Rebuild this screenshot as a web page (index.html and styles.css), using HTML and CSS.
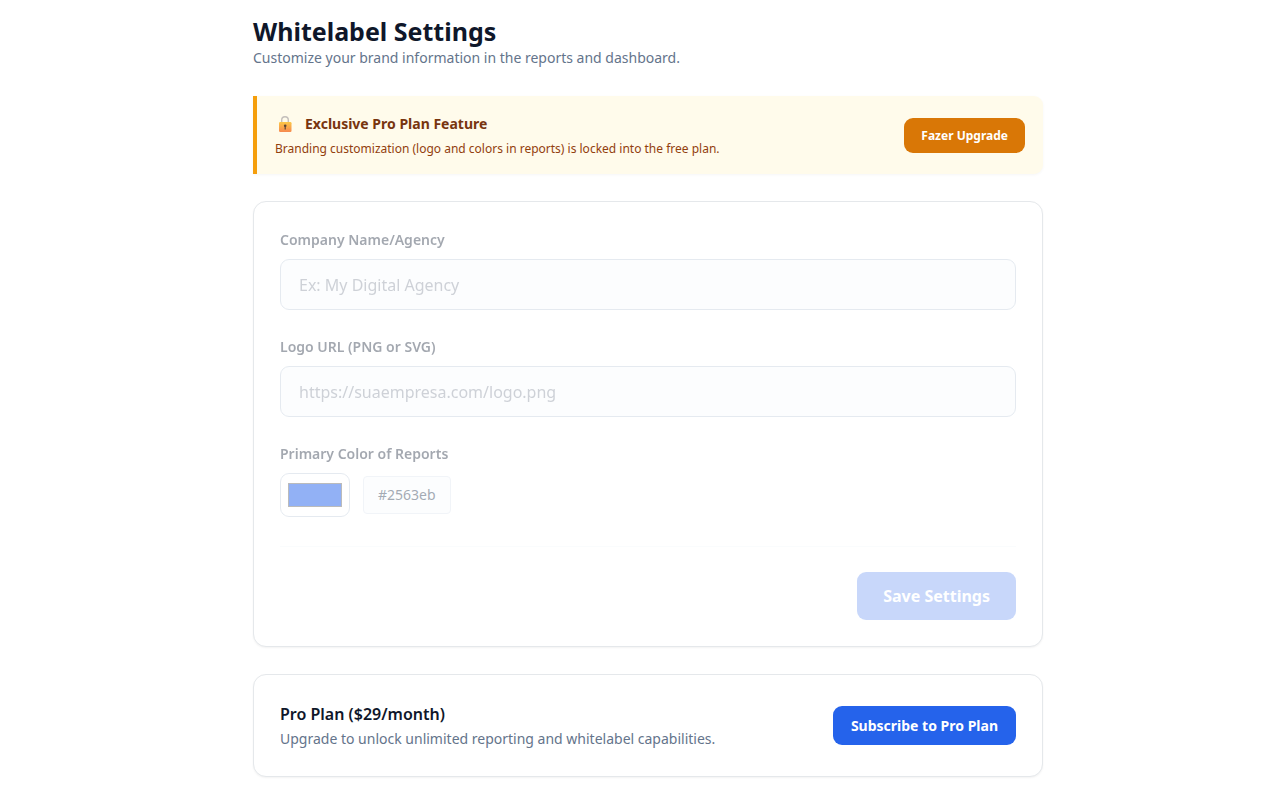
FILE: index.html
```html
<!DOCTYPE html>
<html lang="en">
<head>
  <meta charset="UTF-8" />
  <meta name="viewport" content="width=device-width, initial-scale=1.0" />
  <title>Whitelabel Settings</title>
  <link rel="stylesheet" href="styles.css">
</head>
<body>

  <main class="page">
    <header class="page-header">
      <h1>Whitelabel Settings</h1>
      <p>Customize your brand information in the reports and dashboard.</p>
    </header>

    <section class="notice">
      <div class="notice-text">
        <h2>
          <svg class="lock" viewBox="0 0 20 18" aria-hidden="true">
            <defs>
              <linearGradient id="lockBody" x1="0" y1="0" x2="0" y2="1">
                <stop offset="0" stop-color="#fcc746" />
                <stop offset="1" stop-color="#f6894f" />
              </linearGradient>
            </defs>
            <path d="M6.7 9V5a3.3 3.3 0 0 1 6.6 0V9" fill="none" stroke="#c4bfbb" stroke-width="1.4" />
            <rect x="4" y="7" width="12.5" height="10" rx="1.2" fill="url(#lockBody)" />
            <circle cx="10.2" cy="10.8" r="1.3" fill="#5c4436" />
            <path d="M9.6 11h1.2v3.4H9.6z" fill="#5c4436" />
          </svg>
          Exclusive Pro Plan Feature
        </h2>
        <p>Branding customization (logo and colors in reports) is locked into the free plan.</p>
      </div>
      <button type="button" class="btn btn-upgrade">Fazer Upgrade</button>
    </section>

    <form class="card">
      <fieldset class="fields" disabled>
        <div class="form-group">
          <label for="company">Company Name/Agency</label>
          <input type="text" id="company" placeholder="Ex: My Digital Agency" />
        </div>
        <div class="form-group">
          <label for="logoUrl">Logo URL (PNG or SVG)</label>
          <input type="text" id="logoUrl" placeholder="https://suaempresa.com/logo.png" />
        </div>
        <div class="form-group">
          <label for="color">Primary Color of Reports</label>
          <div class="color-row">
            <input type="color" id="color" value="#2563eb" />
            <span class="color-code">#2563eb</span>
          </div>
        </div>
        <div class="form-footer">
          <button type="submit" class="btn btn-save">Save Settings</button>
        </div>
      </fieldset>
    </form>

    <section class="card plan">
      <div class="plan-text">
        <h2>Pro Plan ($29/month)</h2>
        <p>Upgrade to unlock unlimited reporting and whitelabel capabilities.</p>
      </div>
      <button type="button" class="btn btn-subscribe">Subscribe to Pro Plan</button>
    </section>
  </main>

</body>
</html>
```
FILE: styles.css
```css
* {
  box-sizing: border-box;
}
body {
  font-family: 'Segoe UI', 'Noto Sans', 'Open Sans', sans-serif;
  background: #fff;
  margin: 0;
  padding: 16px 0 16px 16px;
}
h1, h2, p {
  margin: 0;
}
.page {
  max-width: 790px;
  margin: 0 auto;
  display: flex;
  flex-direction: column;
  gap: 27px;
}
.page-header h1 {
  color: #0f172a;
  font-size: 25px;
  line-height: 31px;
  font-weight: 700;
}
.page-header p {
  color: #64748b;
  font-size: 14px;
  line-height: 22px;
}
.notice {
  display: flex;
  align-items: center;
  justify-content: space-between;
  gap: 16px;
  padding: 12px 18px;
  background: #fffbeb;
  border-left: 4px solid #f59e0b;
  border-radius: 0 9px 9px 0;
  box-shadow: 0 1px 3px rgba(0,0,0,0.04);
}
.notice-text {
  padding-top: 4px;
}
.notice h2 {
  display: flex;
  align-items: center;
  gap: 10px;
  color: #78350f;
  font-size: 14px;
  line-height: 24px;
  font-weight: 700;
}
.notice p {
  color: #92400e;
  font-size: 12px;
  line-height: 26px;
}
.lock {
  width: 20px;
  height: 18px;
}
.card {
  padding: 26px;
  background: #fff;
  border: 1px solid #e5e8eb;
  border-radius: 13px;
  box-shadow: 0 1px 2px rgba(0,0,0,0.05);
}
.fields {
  margin: 0;
  padding: 0;
  border: none;
  min-width: 0;
  opacity: .5;
}
.form-group {
  margin-bottom: 25px;
}
label {
  display: block;
  margin-bottom: 8px;
  color: #475060;
  font-size: 14px;
  line-height: 23px;
  font-weight: 600;
}
input[type="text"] {
  display: block;
  width: 100%;
  height: 51px;
  padding: 0 18px;
  font-family: inherit;
  font-size: 16px;
  background: #f8fafc;
  border: 1px solid #cbd5e1;
  border-radius: 9px;
}
input::placeholder {
  color: #9ca3af;
}
.color-row {
  display: flex;
  align-items: center;
  gap: 13px;
}
input[type="color"] {
  width: 70px;
  height: 44px;
  padding: 9px 7px;
  background: #fff;
  border: 1px solid #cbd5e1;
  border-radius: 9px;
}
input[type="color"]::-webkit-color-swatch-wrapper {
  padding: 0;
}
input[type="color"]::-webkit-color-swatch {
  border: 1px solid #777;
}
.color-code {
  padding: 7px 14px;
  color: #475569;
  font-size: 14px;
  line-height: 22px;
  background: #f8fafc;
  border: 1px solid #e2e8f0;
  border-radius: 4px;
}
.form-footer {
  display: flex;
  justify-content: flex-end;
  margin-top: 29px;
  padding-top: 25px;
  border-top: 1px solid #f5f8fb;
}
.btn {
  color: #fff;
  font-family: inherit;
  font-weight: 700;
  border: none;
  border-radius: 9px;
  white-space: nowrap;
  cursor: pointer;
}
.btn-upgrade {
  padding: 0 17px;
  height: 35px;
  background: #d97706;
  font-size: 12px;
}
.btn-save {
  padding: 0 26px;
  height: 48px;
  background: #2563eb;
  font-size: 16px;
  opacity: .5;
  cursor: not-allowed;
}
.btn-subscribe {
  padding: 0 18px;
  height: 39px;
  background: #2563eb;
  font-size: 14px;
}
.btn-upgrade:hover {
  background: #b45309;
}
.btn-subscribe:hover {
  background: #1d4ed8;
}
.plan {
  display: flex;
  align-items: center;
  justify-content: space-between;
  gap: 16px;
}
.plan h2 {
  color: #0f172a;
  font-size: 16px;
  line-height: 27px;
  font-weight: 600;
}
.plan p {
  color: #64748b;
  font-size: 14px;
  line-height: 22px;
}
```
